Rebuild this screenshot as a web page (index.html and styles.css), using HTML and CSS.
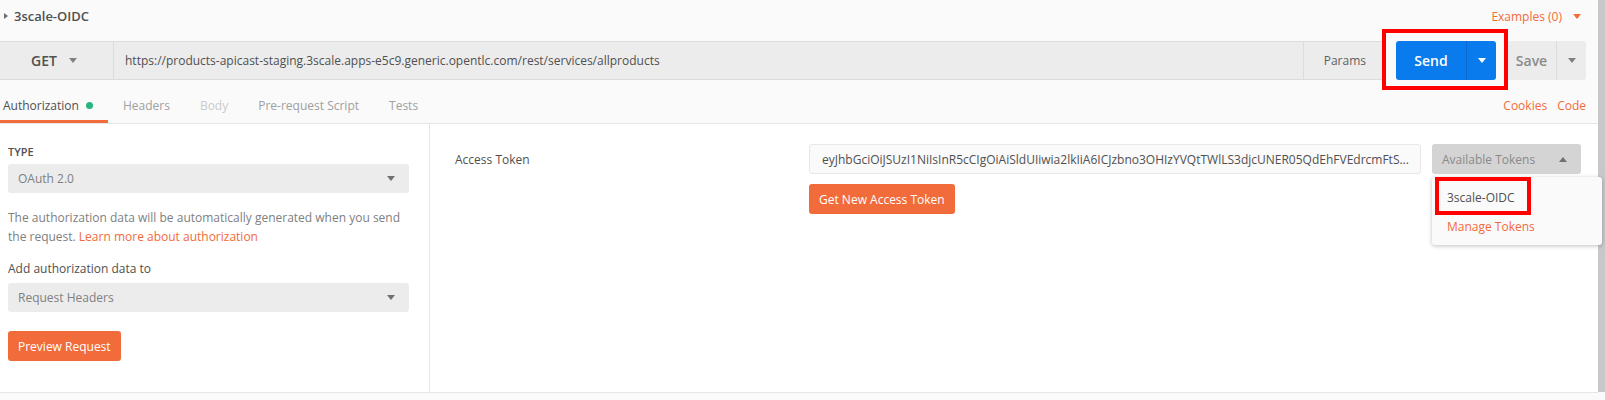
FILE: index.html
```html
<!DOCTYPE html>
<html>
<head>
<meta charset="utf-8">
<link rel="stylesheet" href="styles.css">
</head>
<body>
<div class="page">
  <div class="app">
    <div class="title-row">
      <div class="title">
        <svg class="tri-right" width="4" height="6" viewBox="0 0 4 6"><polygon points="0,0 4,3 0,6" fill="#707070"/></svg>
        <span>3scale-OIDC</span>
      </div>
      <div class="examples">
        <span>Examples (0)</span>
        <svg width="8" height="5" viewBox="0 0 8 5"><polygon points="0,0 8,0 4,5" fill="#f26b3a"/></svg>
      </div>
    </div>

    <div class="url-row">
      <div class="url-bar">
        <div class="method">
          <span>GET</span>
          <svg width="8" height="5" viewBox="0 0 8 5"><polygon points="0,0 8,0 4,5" fill="#808080"/></svg>
        </div>
        <div class="url">https://products-apicast-staging.3scale.apps-e5c9.generic.opentlc.com/rest/services/allproducts</div>
        <div class="params">Params</div>
      </div>
      <div class="send-wrap">
        <div class="send-group">
          <span class="send-label">Send</span>
          <span class="send-caret"><svg width="8" height="5" viewBox="0 0 8 5"><polygon points="0,0 8,0 4,5" fill="#ffffff"/></svg></span>
        </div>
        <div class="mark mark-send"></div>
      </div>
      <div class="save-group">
        <span class="save-label">Save</span>
        <span class="save-caret"><svg width="8" height="5" viewBox="0 0 8 5"><polygon points="0,0 8,0 4,5" fill="#808080"/></svg></span>
      </div>
    </div>

    <div class="tabs-row">
      <div class="tabs">
        <div class="tab tab-active">Authorization <span class="dot"></span></div>
        <div class="tab tab-muted">Headers</div>
        <div class="tab tab-disabled">Body</div>
        <div class="tab tab-muted">Pre-request Script</div>
        <div class="tab tab-muted">Tests</div>
      </div>
      <div class="tab-links">
        <span>Cookies</span>
        <span>Code</span>
      </div>
    </div>

    <div class="content">
      <div class="left">
        <div class="label-type">TYPE</div>
        <div class="select select-type">
          <span>OAuth 2.0</span>
          <svg width="8" height="5" viewBox="0 0 8 5"><polygon points="0,0 8,0 4,5" fill="#707070"/></svg>
        </div>
        <p class="help">The authorization data will be automatically generated when you send the request. <a class="link">Learn more about authorization</a></p>
        <div class="label-add">Add authorization data to</div>
        <div class="select select-add">
          <span>Request Headers</span>
          <svg width="8" height="5" viewBox="0 0 8 5"><polygon points="0,0 8,0 4,5" fill="#707070"/></svg>
        </div>
        <div class="btn-orange btn-preview">Preview Request</div>
      </div>
      <div class="right">
        <div class="token-row">
          <div class="token-label">Access Token</div>
          <div class="token-col">
            <div class="token-input">eyJhbGciOiJSUzI1NiIsInR5cCIgOiAiSldUIiwia2lkIiA6ICJzbno3OHIzYVQtTWlLS3djcUNER05QdEhFVEdrcmFtS...</div>
            <div class="btn-orange btn-token">Get New Access Token</div>
          </div>
          <div class="avail-wrap">
            <div class="avail">
              <span>Available Tokens</span>
              <svg width="8" height="5" viewBox="0 0 8 5"><polygon points="0,5 8,5 4,0" fill="#707070"/></svg>
            </div>
            <div class="menu">
              <div class="menu-item">3scale-OIDC</div>
              <div class="menu-item menu-link">Manage Tokens</div>
              <div class="mark mark-menu"></div>
            </div>
          </div>
        </div>
      </div>
    </div>
  </div>
  <div class="scrollbar"></div>
</div>
</body>
</html>
```

FILE: styles.css
```css
* { box-sizing: border-box; }

body {
  margin: 0;
  background: #fafafa;
  font-family: "Open Sans", "Liberation Sans", sans-serif;
  font-size: 12px;
  color: #505050;
}

.page {
  display: flex;
  width: 1605px;
  height: 400px;
  overflow: hidden;
}

.app {
  width: 1598px;
  flex: none;
}

.scrollbar {
  width: 7px;
  height: 392px;
  background: #c8c8c8;
  flex: none;
}

/* title row */
.title-row {
  height: 32px;
  margin-bottom: 9px;
  display: flex;
  align-items: center;
  justify-content: space-between;
  padding: 0 17px 0 4px;
}

.title {
  display: flex;
  align-items: center;
  gap: 6px;
  font-size: 13px;
  font-weight: 600;
  color: #505050;
}

.examples {
  display: flex;
  align-items: center;
  gap: 11px;
  color: #f26b3a;
  font-size: 12px;
}

/* url row */
.url-row {
  display: flex;
  height: 39px;
  padding-right: 12px;
}

.url-bar {
  flex: 1;
  display: flex;
  align-items: stretch;
  background: #ececec;
  border-top: 1px solid #dcdcdc;
  border-bottom: 1px solid #dcdcdc;
  margin-right: 12px;
}

.method {
  width: 114px;
  flex: none;
  display: flex;
  align-items: center;
  gap: 12px;
  padding-left: 31px;
  border-right: 1px solid #dcdcdc;
  font-size: 14px;
  font-weight: 600;
  color: #505050;
}

.url {
  flex: 1;
  display: flex;
  align-items: center;
  padding-left: 11px;
  color: #505050;
  white-space: nowrap;
}

.params {
  display: flex;
  align-items: center;
  padding: 0 18px 0 20px;
  border-left: 1px solid #dcdcdc;
  color: #606060;
}

.send-wrap {
  position: relative;
  flex: none;
}

.send-group {
  display: flex;
  width: 100px;
  height: 39px;
  background: #097bed;
  border-radius: 3px;
  color: #ffffff;
}

.send-label {
  width: 70px;
  display: flex;
  align-items: center;
  justify-content: center;
  font-size: 14px;
  font-weight: 600;
}

.send-caret {
  width: 30px;
  display: flex;
  align-items: center;
  justify-content: center;
  border-left: 1px solid #0a6ad0;
}

.mark {
  position: absolute;
  border: 4px solid #ff0000;
  pointer-events: none;
}

.mark-send {
  left: -14px;
  top: -12px;
  width: 126px;
  height: 61px;
}

.save-group {
  margin-left: 11px;
  display: flex;
  width: 79px;
  height: 39px;
  background: #ececec;
  border-radius: 3px;
}

.save-label {
  width: 49px;
  display: flex;
  align-items: center;
  justify-content: center;
  font-size: 14px;
  font-weight: 600;
  color: #8a8a8a;
}

.save-caret {
  width: 30px;
  display: flex;
  align-items: center;
  justify-content: center;
  border-left: 1px solid #dcdcdc;
}

/* tabs */
.tabs-row {
  display: flex;
  justify-content: space-between;
  padding-top: 10px;
  border-bottom: 1px solid #e6e6e6;
  padding-right: 12px;
}

.tabs {
  display: flex;
}

.tab {
  height: 33px;
  padding: 0 15px;
  display: flex;
  align-items: center;
  border-bottom: 3px solid transparent;
  font-size: 12px;
}

.tab-active {
  padding-left: 3px;
  border-bottom-color: #f26b3a;
  color: #505050;
  gap: 7px;
}

.dot {
  width: 7px;
  height: 7px;
  border-radius: 50%;
  background: #26b47f;
}

.tab-muted { color: #a0a0a0; }
.tab-disabled { color: #cacaca; }

.tab-links {
  display: flex;
  gap: 10px;
  align-items: center;
  padding-bottom: 3px;
  color: #f26b3a;
}

/* content */
.content {
  display: flex;
  height: 269px;
  border-bottom: 1px solid #e6e6e6;
  background: #ffffff;
}

.left {
  width: 430px;
  flex: none;
  border-right: 1px solid #e6e6e6;
  padding: 20px 20px 0 8px;
}

.label-type {
  font-size: 11px;
  font-weight: 600;
  line-height: 16px;
  color: #505050;
}

.select {
  margin-top: 4px;
  height: 29px;
  width: 401px;
  background: #ececec;
  border-radius: 3px;
  display: flex;
  align-items: center;
  justify-content: space-between;
  padding: 0 14px 0 10px;
  color: #808080;
}

.help {
  margin: 15px 0 0;
  line-height: 19px;
  color: #808080;
}

.link { color: #f26b3a; }

.label-add {
  margin-top: 14px;
  line-height: 18px;
  color: #505050;
}

.select-add {
  margin-top: 5px;
}

.btn-orange {
  display: inline-flex;
  align-items: center;
  height: 30px;
  padding: 0 10px;
  background: #f26b3a;
  color: #ffffff;
  border-radius: 3px;
}

.btn-preview {
  margin-top: 19px;
}

.right {
  flex: 1;
  padding: 20px 17px 0 25px;
}

.token-row {
  display: flex;
  align-items: flex-start;
}

.token-label {
  width: 354px;
  flex: none;
  height: 30px;
  display: flex;
  align-items: center;
  color: #505050;
}

.token-col {
  width: 612px;
  flex: none;
}

.token-input {
  height: 30px;
  display: flex;
  align-items: center;
  padding-left: 12px;
  background: #fafafa;
  border: 1px solid #e8e8e8;
  border-radius: 3px;
  color: #505050;
  white-space: nowrap;
  overflow: hidden;
}

.btn-token {
  margin-top: 10px;
}

.avail-wrap {
  position: relative;
  margin-left: 11px;
}

.avail {
  width: 149px;
  height: 30px;
  display: flex;
  align-items: center;
  justify-content: space-between;
  padding: 0 14px 0 10px;
  background: #d4d4d4;
  border-radius: 3px;
  color: #8a8a8a;
}

.menu {
  position: absolute;
  left: 0;
  top: 33px;
  width: 170px;
  height: 68px;
  background: #fafafa;
  border-radius: 3px;
  box-shadow: 0 1px 4px rgba(0, 0, 0, 0.25);
  padding-top: 6px;
  z-index: 5;
}

.menu-item {
  height: 29px;
  display: flex;
  align-items: center;
  padding-left: 15px;
  color: #505050;
}

.menu-link { color: #f26b3a; }

.mark-menu {
  left: 3px;
  top: 0;
  width: 96px;
  height: 38px;
}
```
